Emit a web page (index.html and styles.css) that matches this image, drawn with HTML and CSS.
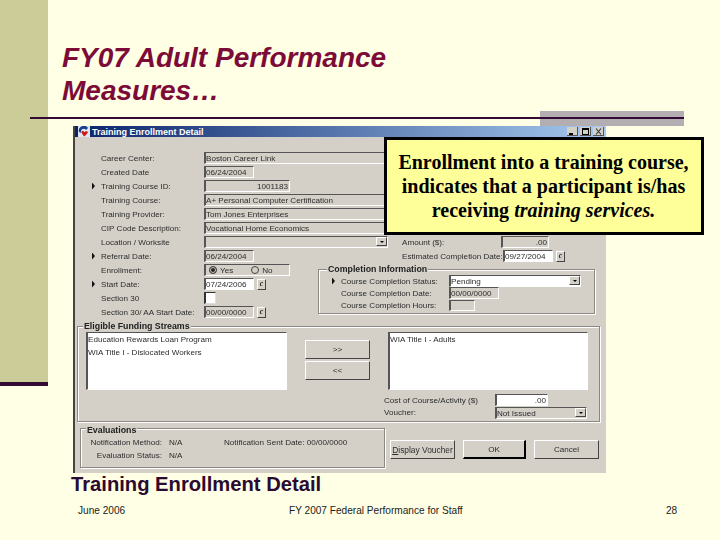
FILE: index.html
```html
<!DOCTYPE html>
<html lang="en">
<head>
<meta charset="utf-8">
<title>FY07 Adult Performance Measures</title>
<link rel="stylesheet" href="styles.css">
</head>
<body>
<div class="slide">
  <div class="band"></div>
  <main class="content">
    <h1 class="title">FY07 Adult Performance<br>Measures…</h1>
    <section class="dialog">
      <div class="titlebar">
        <svg class="app-icon" width="12" height="11" viewBox="0 0 12 11"><rect width="12" height="11" fill="#dfe6f2"/><path d="M1 6 A5 5 0 0 1 10 2 L8 4 A2.5 2.5 0 0 0 3.5 7 Z" fill="#1b3f8f"/><path d="M3.5 5.5 C5 4.5 6 5.5 6.5 6.2 C7 5.5 8.5 4.5 10 5.8 C9.5 8 7.5 9.5 6.5 10.5 C5.5 9.5 3.5 8 3.5 5.5 Z" fill="#d01818"/></svg>
        <span class="titletext">Training Enrollment Detail</span>
        <span class="winbtns">
          <span class="winbtn"><svg width="9" height="7" viewBox="0 0 9 7"><rect x="1" y="5" width="4" height="2" fill="#000"/></svg></span>
          <span class="winbtn"><svg width="9" height="7" viewBox="0 0 9 7"><path d="M1 0h7v7H1z M2 2v4h5V2z" fill="#000" fill-rule="evenodd"/></svg></span>
          <span class="winbtn"><svg width="9" height="7" viewBox="0 0 9 7"><path d="M2 0.5 L7 6.5 M7 0.5 L2 6.5" stroke="#333" stroke-width="1.1"/></svg></span>
        </span>
      </div>
      <div class="form">
        <div class="row"><span class="mark"></span><span class="lbl">Career Center:</span><span class="field w-wide">Boston Career Link</span></div>
        <div class="row"><span class="mark"></span><span class="lbl">Created Date</span><span class="field w-date">06/24/2004</span></div>
        <div class="row"><span class="mark on"></span><span class="lbl">Training Course ID:</span><span class="field w-id num">1001183</span></div>
        <div class="row"><span class="mark"></span><span class="lbl">Training Course:</span><span class="field w-wide">A+ Personal Computer Certification</span></div>
        <div class="row"><span class="mark"></span><span class="lbl">Training Provider:</span><span class="field w-wide">Tom Jones Enterprises</span></div>
        <div class="row"><span class="mark"></span><span class="lbl">CIP Code Description:</span><span class="field w-wide">Vocational Home Economics</span></div>
        <div class="row"><span class="mark"></span><span class="lbl">Location / Worksite</span><span class="field w-wide"><i class="drop"></i></span><span class="lbl side">Amount ($):</span><span class="field w-amt num">.00</span></div>
        <div class="row"><span class="mark on"></span><span class="lbl">Referral Date:</span><span class="field w-date">06/24/2004</span><span class="lbl side-est">Estimated Completion Date:</span><span class="field w-date white">09/27/2004</span><span class="cbtn">c</span></div>
        <div class="split">
          <div class="split-left">
            <div class="row"><span class="mark"></span><span class="lbl">Enrollment:</span><span class="field w-id radios"><i class="radio sel"></i>Yes<i class="radio gap"></i>No</span></div>
            <div class="row"><span class="mark on"></span><span class="lbl">Start Date:</span><span class="field w-date white">07/24/2006</span><span class="cbtn">c</span></div>
            <div class="row"><span class="mark"></span><span class="lbl">Section 30</span><span class="check"></span></div>
            <div class="row"><span class="mark"></span><span class="lbl">Section 30/ AA Start Date:</span><span class="field w-date">00/00/0000</span><span class="cbtn">c</span></div>
          </div>
          <div class="group completion">
            <div class="legend">Completion Information</div>
            <div class="crow"><span class="mark on"></span><span class="clbl">Course Completion Status:</span><span class="field w-status white">Pending<i class="drop"></i></span></div>
            <div class="crow"><span class="mark"></span><span class="clbl">Course Completion Date:</span><span class="field w-date">00/00/0000</span></div>
            <div class="crow"><span class="mark"></span><span class="clbl">Course Completion Hours:</span><span class="field w-hours"></span></div>
          </div>
        </div>
        <div class="group streams">
          <div class="legend">Eligible Funding Streams</div>
          <div class="streams-grid">
            <div class="list"><div>Education Rewards Loan Program</div><div>WIA Title I - Dislocated Workers</div></div>
            <div class="movers"><button class="btn mover">&gt;&gt;</button><button class="btn mover">&lt;&lt;</button></div>
            <div class="list"><div>WIA Title I - Adults</div></div>
          </div>
          <div class="cost-row"><span class="cost-lbl">Cost of Course/Activity ($)</span><span class="field w-cost white num">.00</span></div>
          <div class="cost-row"><span class="cost-lbl">Voucher:</span><span class="field w-voucher">Not Issued<i class="drop"></i></span></div>
        </div>
        <div class="bottom">
          <div class="group evals">
            <div class="legend">Evaluations</div>
            <div class="erow"><span class="elbl">Notification Method:</span><span class="eval">N/A</span><span>Notification Sent Date: 00/00/0000</span></div>
            <div class="erow"><span class="elbl">Evaluation Status:</span><span class="eval">N/A</span></div>
          </div>
          <button class="btn act voucher"><u>D</u>isplay Voucher</button>
          <button class="btn act ok">OK</button>
          <button class="btn act cancel">Cancel</button>
        </div>
      </div>
    </section>
    <h2 class="caption">Training Enrollment Detail</h2>
    <footer class="footer"><span>June 2006</span><span>FY 2007 Federal Performance for Staff</span><span>28</span></footer>
  </main>
  <div class="accent"></div>
  <div class="rule"></div>
  <div class="callout">
    <div>Enrollment into a training course,</div>
    <div>indicates that a participant is/has</div>
    <div>receiving <em>training services.</em></div>
  </div>
</div>
</body>
</html>
```

FILE: styles.css
```css
* { box-sizing: border-box; }
html, body { margin: 0; padding: 0; }
body { width: 720px; height: 540px; overflow: hidden; font-family: "Liberation Sans", Arial, sans-serif; }
.slide { position: relative; width: 720px; height: 540px; background: #ffffe5; display: grid; grid-template-columns: 48px 1fr; align-items: start; overflow: hidden; }
.band { height: 386px; background: #cccc99; border-bottom: 4px solid #330a33; }
.content { padding-top: 41px; min-width: 0; }
.title { margin: 0 0 0 14px; height: 85px; font-size: 28px; line-height: 33px; font-weight: bold; font-style: italic; color: #7d0b38; }
.accent { position: absolute; left: 540px; top: 111px; width: 144px; height: 15px; background: #b2aeb2; }
.rule { position: absolute; left: 30px; top: 117px; width: 654px; height: 2px; background: #330a33; }
.callout { position: absolute; left: 384px; top: 137px; width: 320px; height: 98px; padding: 10px 5px 0 4px; background: #ffff99; border: 3px solid #000; color: #000; text-align: center; font: bold 20px/24px "Liberation Serif", "Times New Roman", serif; white-space: nowrap; }
.callout em { font-style: italic; }

.dialog { margin-left: 25px; width: 533px; height: 347px; background: #d4d0c8; border-left: 2px solid #444; font-size: 8.1px; color: #2c2c2c; }
.titlebar { height: 11px; display: flex; align-items: center; gap: 2px; padding-left: 3px; background: linear-gradient(90deg, #0a246a, #a6caf0); color: #fff; font-weight: bold; font-size: 9px; }
.app-icon { flex: none; }
.winbtns { margin-left: auto; display: flex; gap: 2px; padding-right: 2px; }
.winbtn { width: 11px; height: 9px; display: flex; align-items: center; justify-content: center; background: #d4d0c8; border-right: 1px solid #555; border-bottom: 1px solid #555; }
.form { padding-top: 14px; filter: blur(0.25px); }
.row { height: 14px; display: flex; align-items: center; padding-left: 17px; white-space: nowrap; }
.mark { flex: none; width: 9px; height: 7px; }
.mark.on { background: #111; clip-path: polygon(0 0, 3px 50%, 0 100%); }
.lbl { flex: none; width: 103px; }
.field { flex: none; position: relative; height: 12px; line-height: 11px; background: #d4d0c8; border: 1px solid; border-color: #555 #fff #fff #555; border-left-width: 2px; white-space: nowrap; overflow: hidden; }
.white { background: #fff; }
.num { text-align: right; padding-right: 1px; }
.w-wide { width: 184px; }
.w-date { width: 50px; }
.w-id { width: 86px; }
.w-amt { width: 48px; }
.w-status { width: 132px; }
.w-hours { width: 26px; height: 11px; }
.w-cost { width: 53px; }
.w-voucher { width: 92px; }
.side { width: 99px; margin-left: 14px; }
.side-est { flex: none; width: 101px; margin-left: 148px; white-space: nowrap; }
.drop { position: absolute; right: 0; top: 0; width: 11px; height: 9px; background: #d4d0c8; border: 1px solid; border-color: #fff #444 #444 #fff; }
.drop::after { content: ""; position: absolute; left: 2.5px; top: 3px; border: 2px solid transparent; border-top: 2px solid #000; }
.cbtn { flex: none; width: 9px; height: 11px; margin-left: 3px; background: #d4d0c8; border: 1px solid; border-color: #fff #444 #444 #fff; font: italic bold 8px/8px "Liberation Serif", serif; text-align: center; }
.radios { display: flex; align-items: center; gap: 3px; }
.radio { width: 8px; height: 8px; border-radius: 50%; border: 1px solid #444; background: #d4d0c8; }
.radio.sel { background: #222; box-shadow: inset 0 0 0 1px #d4d0c8; margin-left: 3px; }
.radio.gap { margin-left: 15px; }
.check { flex: none; width: 12px; height: 12px; background: #fff; border: 1px solid; border-color: #333 #ddd #ddd #333; border-left-width: 2px; }

.split { display: flex; height: 56px; }
.split-left { flex: none; width: 243px; }
.group { border: 1px solid #8a8880; box-shadow: inset 1px 1px #fff, 1px 1px #fff; }
.legend { width: fit-content; margin-top: -6px; margin-left: 5px; height: 11px; line-height: 11px; padding: 0 1px; background: #d4d0c8; font-weight: bold; font-size: 8.8px; color: #222; }
.completion { flex: none; width: 277px; height: 45px; margin-top: 6px; padding-left: 13px; }
.completion .legend { margin-left: -5px; }
.crow { height: 12px; display: flex; align-items: center; white-space: nowrap; }
.clbl { width: 108px; flex: none; }

.streams { margin-left: 2px; margin-top: 7px; width: 523px; height: 96px; }
.streams-grid { display: grid; grid-template-columns: 201px 65px 200px; column-gap: 18px; height: 58px; margin: 0 0 4px 8px; }
.list { height: 58px; padding: 0; background: #fff; border: 1px solid; border-color: #555 #fff #fff #555; border-left-width: 2px; line-height: 13px; white-space: nowrap; }
.movers { display: flex; flex-direction: column; gap: 2px; padding-top: 8px; }
.btn { padding: 0; font: inherit; color: inherit; background: #d4d0c8; border: 1px solid; border-color: #fff #444 #444 #fff; }
.mover { height: 19px; width: 65px; }
.cost-row { display: flex; align-items: center; height: 12.5px; padding-left: 306px; white-space: nowrap; }
.cost-lbl { width: 111px; flex: none; }

.bottom { display: flex; align-items: flex-start; margin-top: 6px; margin-left: 5px; }
.evals { flex: none; width: 305px; height: 40px; padding-top: 2px; }
.erow { display: flex; height: 13px; align-items: center; white-space: nowrap; }
.elbl { width: 81px; text-align: right; flex: none; }
.eval { width: 55px; margin-left: 7px; flex: none; }
.act { height: 19px; flex: none; margin-top: 12px; }
.voucher { width: 65px; margin-left: 5px; white-space: nowrap; font-size: 8.4px; }
.ok { width: 63px; margin-left: 8px; border-color: #fff #000 #000 #fff; border-width: 1px 2px 2px 1px; }
.cancel { width: 65px; margin-left: 8px; }

.caption { margin: 0 0 0 23px; font-size: 20.2px; line-height: 22px; font-weight: bold; color: #2a0a30; }
.footer { display: grid; grid-template-columns: 211px 377px 1fr; padding-left: 30px; margin-top: 10px; font-size: 10.1px; line-height: 12px; color: #222; }
```
